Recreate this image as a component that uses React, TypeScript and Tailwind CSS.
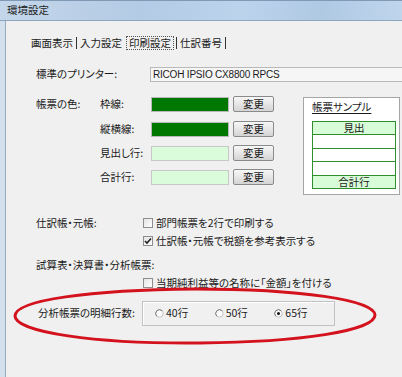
import React from "react";

function Swatch({ dark }: { dark: boolean }) {
  return (
    <div
      className={
        dark
          ? "w-[78px] h-[15px] border border-[#b8b8b8] bg-[#007800]"
          : "w-[78px] h-[15px] border border-[#c8c8c8] bg-[#dbfcdb]"
      }
    />
  );
}

function ChangeBtn() {
  return (
    <div className="ml-[4px] w-[41px] h-[16px] flex items-center justify-center rounded-[2px] border border-[#8a8a8a] bg-[linear-gradient(to_bottom,#f7f7f7,#e6e6e6_50%,#d4d4d4)] text-[10.5px]">
      変更
    </div>
  );
}

function ColorRow({ label, dark, mt }: { label: string; dark: boolean; mt: string }) {
  return (
    <div className={"flex items-center h-[16px] " + mt}>
      <div className="w-[51px]">{label}</div>
      <Swatch dark={dark} />
      <ChangeBtn />
    </div>
  );
}

function CheckBox({ checked }: { checked?: boolean }) {
  return (
    <div className="w-[10px] h-[10px] border border-[#8e8e8e] bg-[linear-gradient(to_bottom_right,#e4e4e4,#ffffff)] flex items-center justify-center">
      {checked ? (
        <svg width="8" height="8" viewBox="0 0 8 8">
          <path d="M1 4 L3 6 L7 1.5" stroke="#222" strokeWidth="1.6" fill="none" />
        </svg>
      ) : null}
    </div>
  );
}

function Radio({ checked }: { checked?: boolean }) {
  return (
    <svg width="9" height="9" viewBox="0 0 9 9">
      <circle cx="4.5" cy="4.5" r="3.7" fill="#fbfbfb" stroke="#c4c4c4" strokeWidth="1" />
      <path d="M7.2 1.8 A3.7 3.7 0 0 0 1.8 7.2" stroke="#7a7a7a" strokeWidth="1" fill="none" />
      {checked ? <circle cx="4.5" cy="4.5" r="1.5" fill="#111" /> : null}
    </svg>
  );
}

export default function App() {
  return (
    <div className="relative w-[402px] h-[377px] overflow-hidden bg-[#f0f0f0] text-[#1b1b1b] text-[10.5px] leading-none font-['Noto_Sans_CJK_JP',sans-serif] [font-feature-settings:'palt']">
      {/* title bar */}
      <div className="h-[21px] border-t border-t-[#8099b5] border-b border-b-[#8ea5bf] bg-[linear-gradient(to_right,#c4d6ea,#b3cbe4_35%,#bcd3ec_60%,#b0c9e3_80%,#bed5ec)] flex items-center pl-[7px] text-[#1e1e1e]">
        環境設定
      </div>

      <div className="flex h-[356px]">
        <div className="w-[6px] bg-[#d2e0ee] border-r border-r-[#9aabc0]" />
        <div className="flex-1 flex flex-col">
          {/* tabs */}
          <div className="mt-[15px] h-[14px] flex items-center pl-[25px]">
            <span>画面表示</span>
            <span className="mx-[3px] w-px h-[12px] bg-[#333]" />
            <span>入力設定</span>
            <span className="ml-[4px] px-[2px] h-[14px] flex items-center border border-dotted border-[#555]">印刷設定</span>
            <span className="ml-[2px] mr-[3px] w-px h-[12px] bg-[#333]" />
            <span>仕訳番号</span>
            <span className="ml-[3px] w-px h-[12px] bg-[#333]" />
          </div>

          {/* printer */}
          <div className="mt-[17px] h-[15px] flex items-center">
            <div className="w-[144px] pl-[30px]">標準のプリンター:</div>
            <div className="flex-1 -mr-[4px] h-[15px] border border-[#b9b9b9] bg-[#f6f6f6] flex items-center pl-[2px] text-[10px] font-['Liberation_Sans',sans-serif] tracking-[-0.2px]">
              RICOH IPSIO CX8800 RPCS
            </div>
          </div>

          {/* colors */}
          <div className="mt-[14px] flex">
            <div className="w-[297px] flex">
              <div className="w-[94px] pl-[30px] h-[16px] flex items-center">帳票の色:</div>
              <div className="flex flex-col">
                <ColorRow label="枠線:" dark mt="" />
                <ColorRow label="縦横線:" dark mt="mt-[9px]" />
                <ColorRow label="見出し行:" dark={false} mt="mt-[8px]" />
                <ColorRow label="合計行:" dark={false} mt="mt-[8px]" />
              </div>
            </div>
            <div className="mt-[1px] w-[97px] h-[98px] border border-[#a5a5a5] bg-white pl-[8px] pt-[4px]">
              <div className="underline underline-offset-2 h-[12px]">帳票サンプル</div>
              <div className="mt-[7px] w-[84px] border-b border-[#2f8f2f]">
                <div className="h-[13px] border-t border-x border-[#2f8f2f] bg-[#d8fcd8] flex items-center justify-center">見出</div>
                <div className="h-[14px] border-t border-x border-[#2f8f2f] bg-white" />
                <div className="h-[13px] border-t border-x border-[#2f8f2f] bg-white" />
                <div className="h-[14px] border-t border-x border-[#2f8f2f] bg-white" />
                <div className="h-[13px] border-t border-x border-[#2f8f2f] bg-[#d8fcd8] flex items-center justify-center">合計行</div>
              </div>
            </div>
          </div>

          {/* checkboxes */}
          <div className="mt-[21px] h-[14px] flex items-center">
            <div className="w-[137px] pl-[30px]">仕訳帳・元帳:</div>
            <CheckBox />
            <span className="ml-[3px]">部門帳票を2行で印刷する</span>
          </div>
          <div className="mt-[4px] h-[14px] flex items-center">
            <div className="w-[137px]" />
            <CheckBox checked />
            <span className="ml-[3px]">仕訳帳・元帳で税額を参考表示する</span>
          </div>
          <div className="mt-[10px] h-[14px] flex items-center pl-[30px]">試算表・決算書・分析帳票:</div>
          <div className="mt-[4px] h-[14px] flex items-center">
            <div className="w-[137px]" />
            <CheckBox />
            <span className="ml-[3px]">当期純利益等の名称に「金額」を付ける</span>
          </div>

          {/* group */}
          <div className="mt-[11px] h-[25px] flex items-center">
            <div className="w-[136px] pl-[32px]">分析帳票の明細行数:</div>
            <div className="w-[193px] h-[25px] border border-[#c2c2c2] shadow-[inset_1px_1px_0_#ffffff] flex items-center pl-[12px]">
              <div className="w-[60px] flex items-center gap-[2px]">
                <Radio />
                <span>40行</span>
              </div>
              <div className="w-[60px] flex items-center gap-[2px]">
                <Radio />
                <span>50行</span>
              </div>
              <div className="w-[60px] flex items-center gap-[2px]">
                <Radio checked />
                <span>65行</span>
              </div>
            </div>
          </div>
        </div>
      </div>

      {/* red ellipse annotation */}
      <svg className="absolute inset-0 pointer-events-none" width="402" height="377" viewBox="0 0 402 377">
        <path
          d="M15 316 C 15 300, 90 290, 195 289 C 300 289, 375 300, 375 315 C 375 331, 300 342, 200 343 C 95 344, 15 332, 15 316 Z"
          fill="none"
          stroke="#d3121d"
          strokeWidth="3"
        />
      </svg>
    </div>
  );
}
